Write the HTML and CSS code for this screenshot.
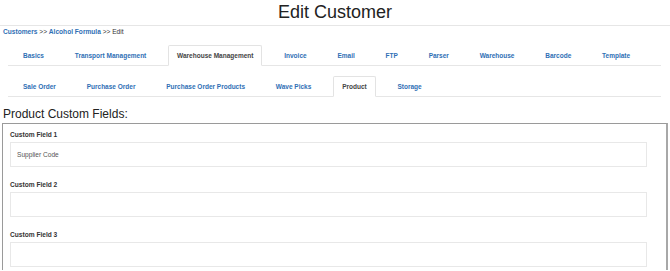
FILE: index.html
```html
<!DOCTYPE html>
<html>
<head>
<meta charset="utf-8">
<link rel="stylesheet" href="styles.css">
</head>
<body>
<header class="page-header">
  <h1 class="title">Edit Customer</h1>
</header>
<div class="breadcrumb">
  <a href="#">Customers</a> &gt;&gt; <a href="#">Alcohol Formula</a> &gt;&gt; Edit
</div>
<ul class="tabs tabs-main">
  <li><a href="#">Basics</a></li>
  <li><a href="#">Transport Management</a></li>
  <li class="active"><a href="#">Warehouse Management</a></li>
  <li><a href="#">Invoice</a></li>
  <li><a href="#">Email</a></li>
  <li><a href="#">FTP</a></li>
  <li><a href="#">Parser</a></li>
  <li><a href="#">Warehouse</a></li>
  <li><a href="#">Barcode</a></li>
  <li><a href="#">Template</a></li>
</ul>
<ul class="tabs tabs-sub">
  <li><a href="#">Sale Order</a></li>
  <li><a href="#">Purchase Order</a></li>
  <li><a href="#">Purchase Order Products</a></li>
  <li><a href="#">Wave Picks</a></li>
  <li class="active"><a href="#">Product</a></li>
  <li><a href="#">Storage</a></li>
</ul>
<h2 class="section-title">Product Custom Fields:</h2>
<div class="field-box">
  <div class="field">
    <label class="field-label">Custom Field 1</label>
    <div class="field-input">Supplier Code</div>
  </div>
  <div class="field">
    <label class="field-label">Custom Field 2</label>
    <div class="field-input"></div>
  </div>
  <div class="field">
    <label class="field-label">Custom Field 3</label>
    <div class="field-input"></div>
  </div>
</div>
</body>
</html>
```
FILE: styles.css
```css
html, body {
  margin: 0;
  padding: 0;
  background: #fff;
  font-family: "Liberation Sans", Arial, Helvetica, sans-serif;
  color: #333;
  overflow: hidden;
}
body {
  padding: 0 2px;
  height: 271px;
}
.page-header {
  margin: 0 -2px;
  border-bottom: 1px solid #e6e6e6;
  height: 25px;
  display: flex;
  justify-content: center;
}
.title {
  margin: 0;
  font-size: 18px;
  font-weight: normal;
  line-height: 24px;
  color: #222;
}
.breadcrumb {
  font-size: 6.6px;
  line-height: 10px;
  margin-top: 1px;
  padding-left: 1px;
  color: #333;
  white-space: nowrap;
}
.breadcrumb a {
  color: #2f6fb5;
  font-weight: bold;
  text-decoration: none;
}
.tabs {
  list-style: none;
  display: flex;
  margin: 0 7px 0 6px;
  padding: 0 0 0 6px;
  border-bottom: 1px solid #e6e6e6;
  font-size: 6.5px;
  font-weight: bold;
  white-space: nowrap;
}
.tabs-main {
  margin-top: 8px;
}
.tabs-sub {
  margin-top: 10px;
}
.tabs li {
  flex: 0 0 auto;
  margin-right: 12.8px;
  margin-bottom: -1px;
}
.tabs a {
  display: block;
  padding: 0 8px;
  height: 20px;
  line-height: 20px;
  color: #2f6fb5;
  text-decoration: none;
  border: 1px solid transparent;
  border-bottom: none;
  box-sizing: border-box;
}
.tabs li.active a {
  color: #444;
  background: #fff;
  border-color: #e3e3e3;
  height: 21px;
  border-bottom: 1px solid #fff;
  border-radius: 2px 2px 0 0;
}
.section-title {
  margin: 9px 0 0 1px;
  font-size: 12px;
  line-height: 16px;
  font-weight: normal;
  color: #222;
  white-space: nowrap;
}
.field-box {
  margin-top: 1px;
  border: 1px solid #9a9a9a;
  border-right: 2px solid #a8a8a8;
  border-bottom: none;
  padding: 6px 19px 0 7px;
  height: 140px;
}
.field {
  margin-bottom: 13px;
}
.field:last-child {
  margin-bottom: 0;
}
.field-label {
  display: block;
  font-size: 6.6px;
  font-weight: bold;
  line-height: 10px;
  margin-bottom: 2px;
  color: #333;
  white-space: nowrap;
}
.field-input {
  height: 25px;
  box-sizing: border-box;
  border: 1px solid #e8e8e8;
  font-size: 6.6px;
  line-height: 23px;
  padding-left: 6px;
  color: #555;
}
```
